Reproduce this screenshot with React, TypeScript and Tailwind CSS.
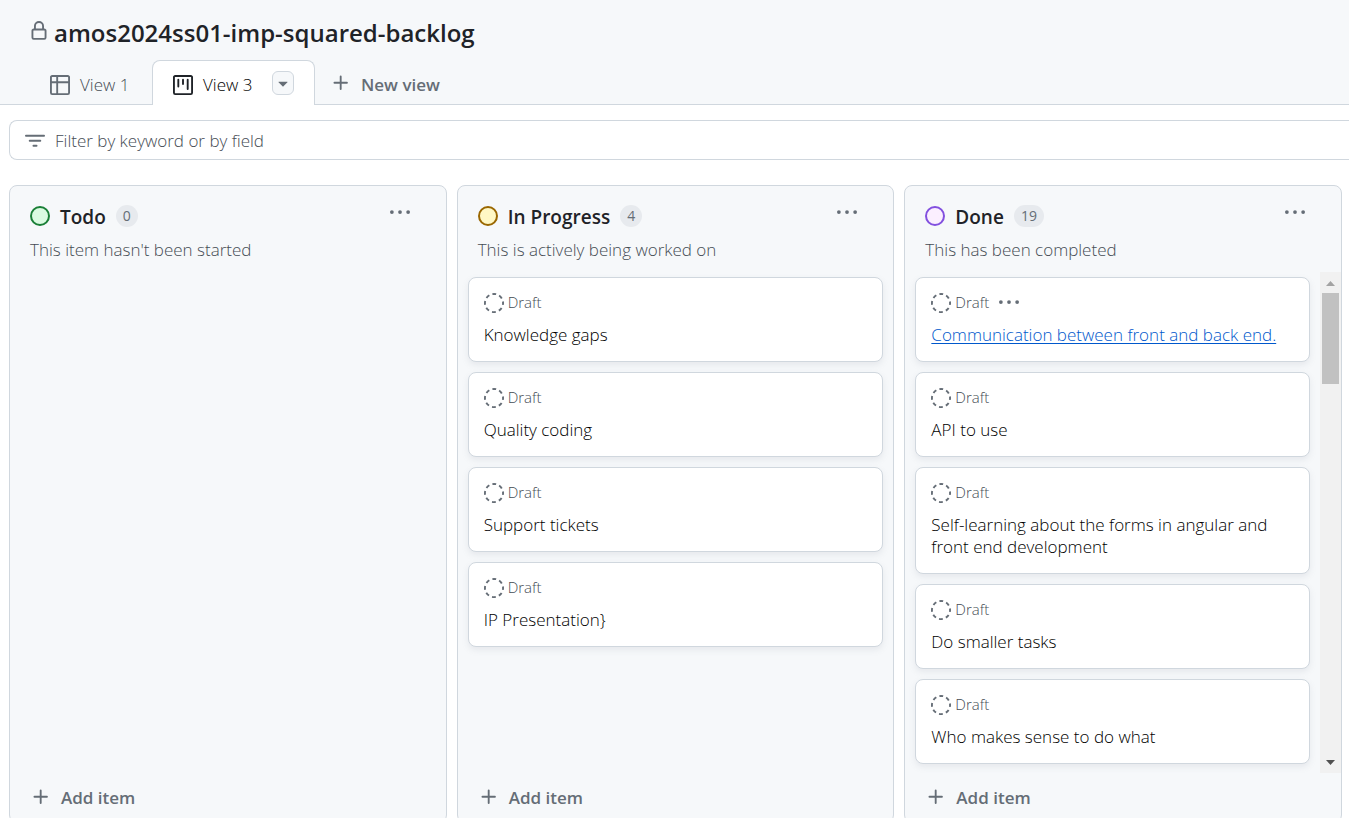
import type { ReactNode } from "react";

type IconProps = { className?: string };

function Icon({ className = "", children }: { className?: string; children: ReactNode }) {
  return (
    <svg viewBox="0 0 16 16" fill="currentColor" aria-hidden="true" className={`size-5 shrink-0 ${className}`}>
      {children}
    </svg>
  );
}

const LockIcon = ({ className }: IconProps) => (
  <Icon className={className}>
    <path d="M4 4a4 4 0 0 1 8 0v2h.25c.966 0 1.75.784 1.75 1.75v5.5A1.75 1.75 0 0 1 12.25 15h-8.5A1.75 1.75 0 0 1 2 13.25v-5.5C2 6.784 2.784 6 3.75 6H4Zm8.25 3.5h-8.5a.25.25 0 0 0-.25.25v5.5c0 .138.112.25.25.25h8.5a.25.25 0 0 0 .25-.25v-5.5a.25.25 0 0 0-.25-.25ZM10.5 6V4a2.5 2.5 0 1 0-5 0v2Z" />
  </Icon>
);

const TableIcon = ({ className }: IconProps) => (
  <Icon className={className}>
    <path d="M0 1.75C0 .784.784 0 1.75 0h12.5C15.216 0 16 .784 16 1.75v12.5A1.75 1.75 0 0 1 14.25 16H1.75A1.75 1.75 0 0 1 0 14.25ZM6.5 6.5v8h7.75a.25.25 0 0 0 .25-.25V6.5Zm8-1.5V1.75a.25.25 0 0 0-.25-.25H6.5V5Zm-13 1.5v7.75c0 .138.112.25.25.25H5v-8ZM5 5V1.5H1.75a.25.25 0 0 0-.25.25V5Z" />
  </Icon>
);

const BoardIcon = ({ className }: IconProps) => (
  <Icon className={className}>
    <path d="M1.75 0h12.5C15.216 0 16 .784 16 1.75v12.5A1.75 1.75 0 0 1 14.25 16H1.75A1.75 1.75 0 0 1 0 14.25V1.75C0 .784.784 0 1.75 0ZM1.5 1.75v12.5c0 .138.112.25.25.25h12.5a.25.25 0 0 0 .25-.25V1.75a.25.25 0 0 0-.25-.25H1.75a.25.25 0 0 0-.25.25ZM11.75 3a.75.75 0 0 1 .75.75v7.5a.75.75 0 0 1-1.5 0v-7.5a.75.75 0 0 1 .75-.75Zm-8.25.75a.75.75 0 0 1 1.5 0v5.5a.75.75 0 0 1-1.5 0ZM8 3a.75.75 0 0 1 .75.75v3.5a.75.75 0 0 1-1.5 0v-3.5A.75.75 0 0 1 8 3Z" />
  </Icon>
);

const PlusIcon = ({ className }: IconProps) => (
  <Icon className={className}>
    <path d="M7.75 2a.75.75 0 0 1 .75.75V7h4.25a.75.75 0 0 1 0 1.5H8.5v4.25a.75.75 0 0 1-1.5 0V8.5H2.75a.75.75 0 0 1 0-1.5H7V2.75A.75.75 0 0 1 7.75 2Z" />
  </Icon>
);

const FilterIcon = ({ className }: IconProps) => (
  <Icon className={className}>
    <path d="M.75 3h14.5a.75.75 0 0 1 0 1.5H.75a.75.75 0 0 1 0-1.5ZM3 7.75A.75.75 0 0 1 3.75 7h8.5a.75.75 0 0 1 0 1.5h-8.5A.75.75 0 0 1 3 7.75Zm3 4a.75.75 0 0 1 .75-.75h2.5a.75.75 0 0 1 0 1.5h-2.5a.75.75 0 0 1-.75-.75Z" />
  </Icon>
);

const DotsIcon = ({ className }: IconProps) => (
  <Icon className={className}>
    <circle cx="1.5" cy="8" r="1.5" />
    <circle cx="8" cy="8" r="1.5" />
    <circle cx="14.5" cy="8" r="1.5" />
  </Icon>
);

const CaretIcon = ({ className }: IconProps) => (
  <Icon className={className}>
    <path d="m4.427 7.427 3.396 3.396a.25.25 0 0 0 .354 0l3.396-3.396A.25.25 0 0 0 11.396 7H4.604a.25.25 0 0 0-.177.427Z" />
  </Icon>
);

const DraftIcon = ({ className }: IconProps) => (
  <Icon className={className}>
    <circle
      cx="8"
      cy="8"
      r="7.25"
      fill="none"
      stroke="currentColor"
      strokeWidth="1.5"
      strokeDasharray="3.1 2.594"
      strokeDashoffset="1.55"
    />
  </Icon>
);

type Item = { title: string; active?: boolean };

type Column = {
  name: string;
  count: number;
  description: string;
  dot: string;
  items: Item[];
  scrolls?: boolean;
};

const columns: Column[] = [
  {
    name: "Todo",
    count: 0,
    description: "This item hasn't been started",
    dot: "border-[#1a7f37] bg-[#dafbe1]",
    items: [],
  },
  {
    name: "In Progress",
    count: 4,
    description: "This is actively being worked on",
    dot: "border-[#9a6700] bg-[#fff8c5]",
    items: [
      { title: "Knowledge gaps" },
      { title: "Quality coding" },
      { title: "Support tickets" },
      { title: "IP Presentation}" },
    ],
  },
  {
    name: "Done",
    count: 19,
    description: "This has been completed",
    dot: "border-[#8250df] bg-[#fbefff]",
    scrolls: true,
    items: [
      { title: "Communication between front and back end.", active: true },
      { title: "API to use" },
      { title: "Self-learning about the forms in angular and front end development" },
      { title: "Do smaller tasks" },
      { title: "Who makes sense to do what" },
    ],
  },
];

function Card({ item }: { item: Item }) {
  return (
    <li className="rounded-lg border border-[#d0d7de] bg-white p-[15px] shadow-[0_3px_6px_rgba(140,149,159,0.15)]">
      <div className="flex h-5 items-start text-[#656d76]">
        <DraftIcon />
        <span className="ml-1 text-[15px] leading-[18px] font-light text-[#454c54]">Draft</span>
        {item.active && (
          <button type="button" aria-label="Item actions" className="-mt-px ml-2.5">
            <DotsIcon />
          </button>
        )}
      </div>
      <h3 className="mt-[11px] text-[17px] leading-[22px] font-light">
        <a
          href="#item"
          className={item.active ? "text-[#0058cc] underline decoration-1 underline-offset-2" : "text-black"}
        >
          {item.title}
        </a>
      </h3>
    </li>
  );
}

function ScrollTrack() {
  return (
    <div aria-hidden="true" className="flex w-[21px] shrink-0 flex-col items-center bg-[#f1f1f1]">
      <svg viewBox="0 0 21 21" className="h-[21px] w-full fill-[#a3a3a3]">
        <path d="M6 14h9l-4.500-5z" />
      </svg>
      <div className="h-[91px] w-[17px] bg-[#c1c1c1]" />
      <svg viewBox="0 0 21 21" className="mt-auto h-[21px] w-full fill-[#505050]">
        <path d="M6 8h9l-4.500 5z" />
      </svg>
    </div>
  );
}

function BoardColumn({ column }: { column: Column }) {
  return (
    <section className="flex min-w-0 flex-1 flex-col rounded-lg border border-[#d0d7de] bg-[#f6f8fa]">
      <header className="px-5 pt-5">
        <div className="flex items-start">
          <span className={`size-5 shrink-0 rounded-full border-2 ${column.dot}`} />
          <h2 className="ml-2.5 text-[19px] leading-[22px] font-semibold">{column.name}</h2>
          <span className="-mt-px ml-2.5 rounded-full bg-[#e7eaee] px-[7px] text-[14px] leading-[22px] font-medium text-[#656d76]">
            {column.count}
          </span>
          <button type="button" aria-label={`${column.name} column actions`} className="-mt-1 mr-4 ml-auto text-[#656d76]">
            <DotsIcon />
          </button>
        </div>
        <p className="mt-2.5 text-[17px] leading-6 font-light text-[#454c54]">{column.description}</p>
      </header>
      <div className="mt-2.5 flex min-h-0 flex-1">
        <ul className="flex min-w-0 flex-1 flex-col gap-2.5 overflow-hidden px-2.5 pt-[5px]">
          {column.items.map((item) => (
            <Card key={item.title} item={item} />
          ))}
        </ul>
        {column.scrolls && <ScrollTrack />}
      </div>
      <button
        type="button"
        className="flex h-[49px] shrink-0 items-center gap-2.5 px-[21px] text-[17px] font-semibold text-[#656d76]"
      >
        <PlusIcon className="mb-0.5" />
        Add item
      </button>
    </section>
  );
}

export default function App() {
  return (
    <div className="flex h-screen flex-col overflow-hidden bg-white font-['Open_Sans','Noto_Sans',sans-serif] text-[#1f2328]">
      <header className="bg-[#f6f8fa]">
        <div className="flex h-[60px] items-center pt-1.5 pl-[29px] text-[#656d76]">
          <LockIcon className="mb-1" />
          <h1 className="ml-[5px] text-[24px] leading-8 font-semibold text-[#1f2328]">amos2024ss01-imp-squared-backlog</h1>
        </div>
        <nav aria-label="Views" className="flex h-[45px] text-[17px] text-[#656d76]">
          <div className="flex w-[152px] border-b border-[#d0d7de]">
            <a href="#view-1" className="flex items-center gap-2.5 pt-1.5 pl-[50px]">
              <TableIcon />
              <span className="font-light text-[#454c54]">View 1</span>
            </a>
          </div>
          <div className="flex w-[163px] items-center rounded-t-lg border border-b-0 border-[#d0d7de] bg-white px-5 pt-1 text-[#1f2328]">
            <a href="#view-3" aria-current="page" className="flex items-center gap-2.5">
              <BoardIcon />
              <span className="font-light text-black">View 3</span>
            </a>
            <button
              type="button"
              aria-label="View options"
              className="mb-1 ml-auto flex h-6 w-[22px] items-center justify-center rounded-md border border-[#d0d7de] bg-[#f6f8fa] text-[#656d76]"
            >
              <CaretIcon />
            </button>
          </div>
          <div className="flex flex-1 border-b border-[#d0d7de]">
            <button type="button" className="flex items-center gap-2.5 pt-1.5 pl-4 font-semibold">
              <PlusIcon className="mb-1" />
              New view
            </button>
          </div>
        </nav>
      </header>
      <div className="mt-[15px] ml-[9px] flex h-10 shrink-0 items-center gap-2.5 rounded-l-lg border border-r-0 border-[#d0d7de] pt-px pl-[15px] text-[#656d76]">
        <FilterIcon />
        <input
          type="text"
          aria-label="Filter by keyword or by field"
          placeholder="Filter by keyword or by field"
          className="min-w-0 flex-1 bg-transparent text-[17px] leading-6 font-light outline-none placeholder:text-[#454c54]"
        />
      </div>
      <main className="mt-[25px] -mb-[5px] flex min-h-0 flex-1 gap-2.5 pr-[7px] pl-[9px]">
        {columns.map((column) => (
          <BoardColumn key={column.name} column={column} />
        ))}
      </main>
    </div>
  );
}
